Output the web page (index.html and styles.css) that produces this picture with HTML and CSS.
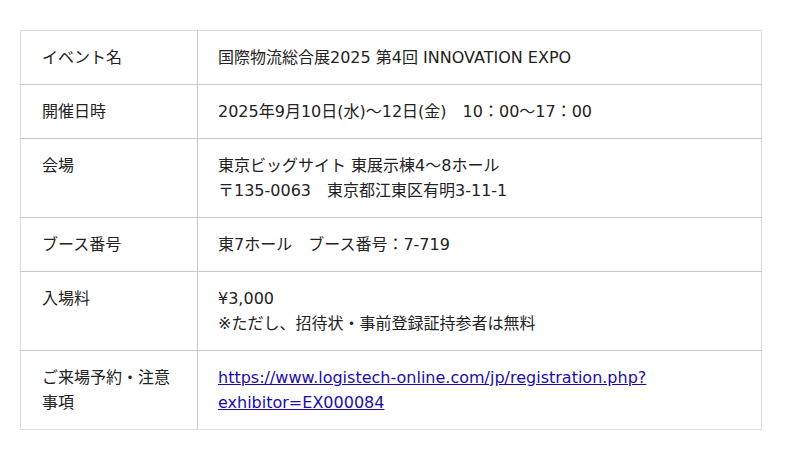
FILE: index.html
```html
<!DOCTYPE html>
<html lang="ja">
<head>
<meta charset="utf-8">
<link rel="stylesheet" href="styles.css">
</head>
<body>
<table class="info">
  <tr><th>イベント名</th><td>国際物流総合展2025 第4回 INNOVATION EXPO</td></tr>
  <tr><th>開催日時</th><td>2025年9月10日(水)～12日(金)　10：00～17：00</td></tr>
  <tr><th>会場</th><td>東京ビッグサイト 東展示棟4～8ホール<br>〒135-0063　東京都江東区有明3-11-1</td></tr>
  <tr><th>ブース番号</th><td>東7ホール　ブース番号：7-719</td></tr>
  <tr><th>入場料</th><td>¥3,000<br>※ただし、招待状・事前登録証持参者は無料</td></tr>
  <tr><th>ご来場予約・注意事項</th><td><a href="#">https://www.logistech-online.com/jp/registration.php?<br>exhibitor=EX000084</a></td></tr>
</table>
</body>
</html>
```
FILE: styles.css
```css
html, body {
  margin: 0;
  padding: 0;
  background: #fff;
}
body {
  padding: 30px 20px;
  font-family: "DejaVu Sans", "Noto Sans CJK JP", sans-serif;
  font-size: 16px;
  line-height: 25px;
  color: #222;
}
.info {
  width: 742px;
  border-collapse: collapse;
  border: 1px solid #ddd;
}
.info th, .info td {
  border-top: 1px solid #c8c8c8;
  border-bottom: 1px solid #c8c8c8;
  padding: 14px 20px;
  text-align: left;
  vertical-align: top;
  font-weight: normal;
}
.info tr:first-child th, .info tr:first-child td { border-top: 1px solid #ddd; }
.info tr:last-child th, .info tr:last-child td { border-bottom: 1px solid #ddd; }
.info th {
  width: 135px;
  padding-left: 21px;
  border-right: 1px solid #c8c8c8;
  border-left: 1px solid #ddd;
}
.info td { border-right: 1px solid #ddd; }
.info a { color: #1a0dab; }
```
